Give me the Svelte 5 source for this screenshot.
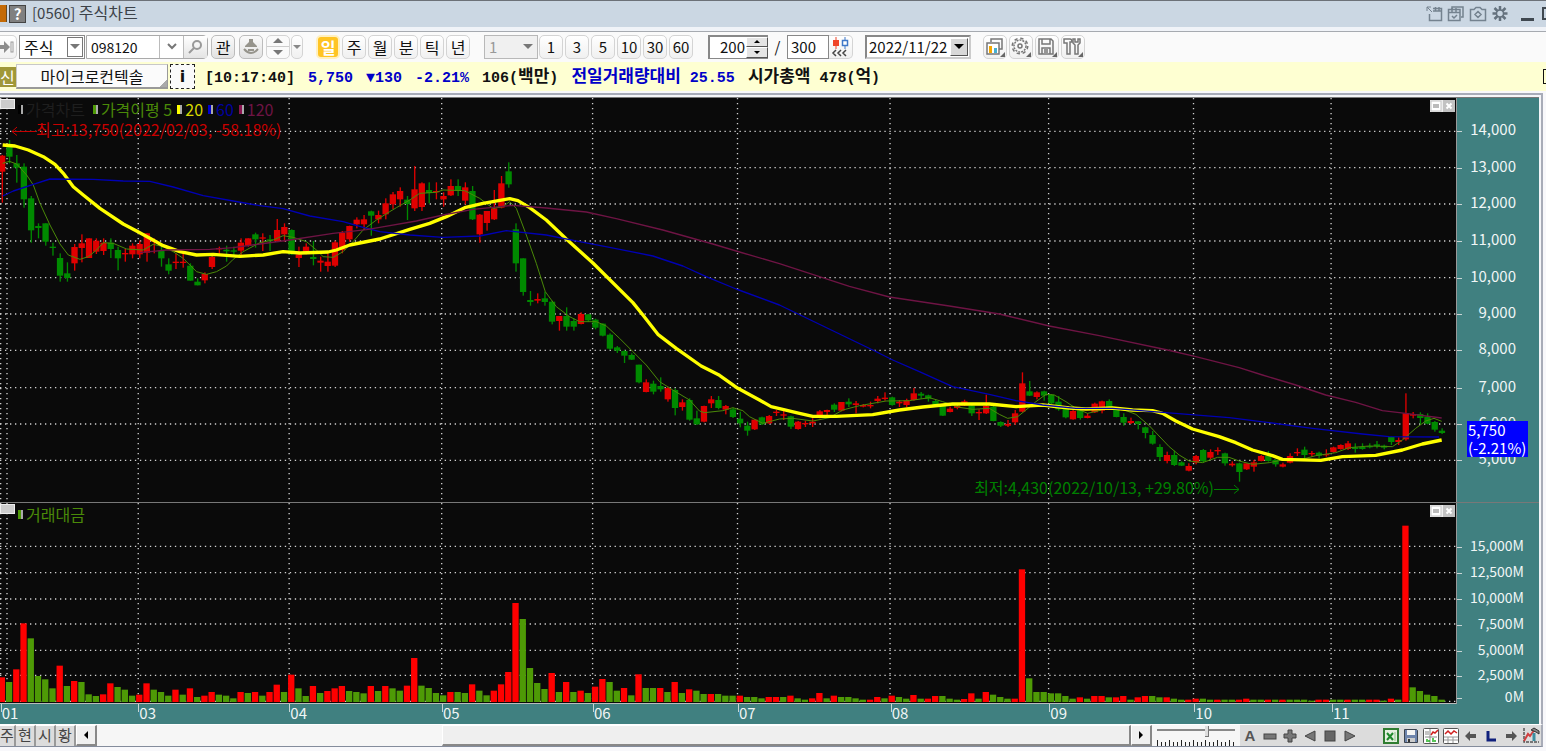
<script lang="ts">
  // plot units: three per pixel, price pane starts at 9
  const W = 4371;
  const PRICE = { top: 9, height: 1212 };
  const VOLUME = { top: 9, height: 600 };

  const xOf = (i: number) => 6 + i * 21.72;

  // direction, high, body top, body bottom, low
  const candles = `R 180 182 230 323,G 135 155 185 205,G 180 205 218 263,G 205 215 313 338,G 303 310 406 443,G 385 393 399 430,G 385 385 440 452,G 443 455 459 482,G 475 489 542 560,G 502 535 549 560
R 447 456 505 527,R 418 445 459 502,R 430 430 489 489,R 430 437 470 477,R 430 443 468 480,G 430 443 462 489,G 455 465 490 526,R 462 474 478 500,R 445 452 478 490,R 437 447 478 490
R 415 415 473 500,R 430 435 440 475,G 455 468 490 515,G 490 508 527 538,R 475 500 504 522,R 470 500 503 518,G 505 512 557 557,G 550 560 571 571,R 532 537 556 565,R 482 486 516 522
R 455 459 462 478,G 452 464 469 500,G 455 466 469 482,R 430 443 467 482,R 430 430 452 455,G 413 418 433 458,R 415 427 431 468,G 420 433 437 468,R 372 405 438 440,R 385 396 418 440
G 403 405 478 480,R 455 478 489 516,R 445 455 470 478,G 438 486 492 511,R 485 497 503 530,R 475 500 513 530,R 437 442 512 516,R 408 414 465 475,R 392 393 433 440,R 367 374 388 400
R 360 373 388 405,G 347 349 362 422,R 347 360 373 385,R 310 325 358 373,R 291 298 328 342,R 277 288 313 335,G 303 314 327 375,R 213 283 340 348,R 262 265 336 348,G 262 285 294 325
R 262 288 292 313,R 292 303 313 335,R 253 273 301 303,G 253 273 288 303,R 262 277 317 328,G 273 288 373 375,R 357 359 418 443,R 348 348 384 407,R 285 340 373 375,R 243 265 338 340
G 202 229 268 278,G 385 403 505 530,G 490 490 591 602,G 588 615 621 632,R 595 612 617 625,G 590 610 621 632,G 617 620 680 688,R 663 663 678 707,G 637 663 695 707,G 670 678 695 707
R 652 657 687 688,G 657 658 676 680,G 671 674 698 703,G 685 686 722 724,G 715 719 761 765,G 753 757 767 774,G 765 768 782 804,G 775 780 794 795,G 809 809 862 865,R 853 862 891 892
G 857 866 890 898,G 847 873 883 890,R 875 879 913 920,G 880 885 939 961,R 913 922 936 947,G 910 915 974 977,G 947 970 988 990,R 932 933 980 982,R 903 913 925 939,G 903 915 939 943
R 930 933 944 958,G 938 943 966 969,G 950 971 985 997,G 980 992 1007 1022,R 973 974 1003 1005,G 965 967 988 990,R 960 963 985 987,R 945 950 954 963,R 947 958 962 975,G 962 964 995 1002
R 978 980 1002 1004,R 977 984 988 996,R 970 980 985 996,R 945 949 965 970,R 944 945 951 960,G 925 929 944 951,R 921 921 947 949,G 910 920 928 936,R 918 925 930 955,R 927 930 935 937
R 920 930 934 940,R 903 911 918 925,R 892 908 912 917,G 905 907 930 932,R 915 920 925 936,R 911 916 930 937,R 879 895 915 917,G 891 896 902 911,G 899 901 911 920,G 913 918 932 936
G 929 932 962 963,R 935 941 951 952,R 930 933 939 943,R 914 919 931 933,G 930 932 955 963,R 943 951 955 975,R 899 933 955 957,G 933 935 978 979,G 979 981 992 996,R 975 987 992 996
R 945 955 982 989,R 832 865 950 952,G 858 889 902 903,R 889 892 906 913,G 887 889 902 917,G 897 899 925 927,G 903 920 943 947,G 933 935 967 970,R 945 948 973 974,G 943 946 969 974
R 955 962 969 970,R 923 926 952 954,R 917 919 947 955,G 913 918 939 940,G 940 943 966 967,G 955 966 983 992,R 968 978 984 987,G 978 979 987 1003,G 995 997 1014 1030,G 1008 1020 1046 1049
G 1048 1056 1086 1098,R 1070 1080 1098 1105,G 1067 1080 1110 1113,G 1099 1102 1112 1113,R 1105 1113 1127 1129,R 1080 1083 1103 1108,G 1062 1065 1099 1103,R 1063 1071 1088 1092,R 1057 1065 1069 1080,G 1073 1075 1105 1112
R 1099 1106 1111 1115,G 1103 1105 1131 1160,R 1105 1105 1123 1125,R 1095 1102 1115 1130,R 1080 1083 1098 1099,G 1068 1083 1098 1100,G 1093 1095 1108 1115,R 1103 1108 1115 1117,R 1075 1083 1103 1105,R 1060 1071 1075 1083
G 1055 1064 1080 1092,R 1068 1074 1078 1085,G 1070 1073 1082 1090,R 1063 1077 1080 1085,R 1055 1057 1071 1073,R 1048 1050 1062 1064,R 1038 1045 1062 1065,G 1045 1057 1062 1073,G 1045 1056 1062 1064,G 1045 1053 1057 1060
G 1038 1048 1053 1060,G 1049 1052 1058 1063,G 1025 1026 1041 1050,R 1027 1035 1041 1050,R 895 955 1033 1037,R 951 957 962 970,G 952 957 969 987,G 955 965 986 988,G 978 981 1004 1010,G 1000 1007 1014 1017`
    .split(/[,\n]/)
    .map((row, i) => {
      const [dir, ...v] = row.trim().split(" ");
      const [high, top, bottom, low] = v.map(Number);
      return { up: dir === "R", x: xOf(i), high, top, bottom, low };
    });

  const volumes = `R74 G60 R98 R236 G191 G78 G68 G41 R109 G48 R63 G60 G23 G18 R23 R56 G45 G37 G19 R22
R56 G37 G30 G19 R37 G22 R41 G15 R19 R30 G22 G19 G11 R30 G27 R30 G19 R30 R52 G30
R82 G41 G18 R48 G27 R33 R41 R48 G33 G30 G26 R48 G33 R48 G41 G34 R49 R132 G49 G42
G27 G20 R30 G30 G27 R53 G34 G20 R34 R53 R90 R297 G249 G102 G57 G39 R87 G30 R60 G30
R34 G27 R46 R69 G60 G34 R42 G20 R83 G42 G42 R42 G30 R60 G27 R38 G34 G24 R24 G24
G19 G19 R19 G15 G15 G11 R15 R15 G15 R19 G11 G7 R11 R27 G11 R19 G15 G15 G11 G7
R7 R15 G11 R19 G15 G10 R21 G10 R10 R18 G18 G10 G7 R9 R26 G10 R30 G22 G15 G10
R10 R398 G71 G30 G30 G26 G26 G18 G10 R14 G10 R18 R18 G14 R14 R18 G7 R14 R18 G18
G14 R14 G10 G7 R7 R10 G10 G7 R7 G7 G7 R7 R10 G7 G7 R7 G7 R7 G7 G7
G7 G4 R7 R7 G7 G7 R7 G7 G7 R7 R7 G4 R10 G7 R529 G44 G33 G22 G18 G7`
    .split(/\s+/)
    .map((v, i) => ({ up: v[0] === "R", x: xOf(i), h: Number(v.slice(1)) }));

  const averages = [
    {
      color: "#4a8a08",
      width: 3,
      points:
        "8,205 28,199 50,207 80,240 100,270 120,325 150,390 180,447 205,480 240,493 265,485 290,465 310,443 340,445 380,462 430,465 460,448 490,455 520,470 550,490 590,530 620,538 650,530 680,513 700,493 730,470 780,443 820,435 850,422 880,427 920,440 950,465 970,485 1000,487 1030,470 1060,440 1090,405 1130,375 1170,350 1190,338 1230,315 1260,295 1310,292 1330,285 1395,287 1440,310 1480,340 1510,335 1530,320 1550,340 1580,420 1610,505 1637,590 1670,635 1710,665 1740,680 1790,680 1820,693 1860,730 1900,770 1940,810 1980,860 2020,885 2070,915 2100,948 2115,953 2170,947 2200,938 2230,947 2250,965 2290,985 2340,972 2380,970 2440,978 2490,968 2530,945 2580,932 2660,918 2730,917 2790,908 2830,920 2880,937 2920,943 2970,940 3000,958 3025,970 3055,965 3080,945 3110,920 3140,898 3165,900 3200,920 3230,940 3265,955 3300,947 3330,935 3370,943 3410,958 3450,992 3510,1055 3540,1080 3570,1098 3610,1103 3655,1087 3690,1087 3720,1098 3760,1108 3810,1103 3850,1095 3920,1090 3950,1082 4010,1073 4050,1058 4110,1053 4180,1055 4210,1035 4250,1000 4280,978 4305,970 4328,979",
    },
    {
      color: "#ffff00",
      width: 10,
      points:
        "8,150 45,153 85,165 130,185 165,208 190,235 220,275 250,300 300,340 370,387 410,408 450,430 490,452 540,470 590,480 640,478 720,484 790,480 850,470 900,474 985,471 1010,465 1050,450 1140,432 1230,403 1290,385 1340,365 1395,338 1450,325 1530,311 1555,317 1590,338 1640,375 1700,432 1780,504 1900,623 1930,660 1975,718 2030,760 2105,813 2160,841 2215,880 2280,915 2315,935 2400,955 2440,964 2510,964 2620,959 2700,945 2770,936 2860,927 2970,927 3050,935 3130,930 3210,939 3260,942 3340,939 3400,945 3460,947 3490,955 3530,978 3580,1002 3660,1025 3710,1043 3760,1065 3820,1082 3850,1093 3965,1096 4030,1085 4130,1081 4210,1065 4270,1047 4328,1035",
    },
    {
      color: "#0000b4",
      width: 4,
      points:
        "8,303 40,288 100,268 150,252 280,253 370,258 450,259 520,276 610,302 700,318 780,332 850,341 930,363 1030,380 1090,397 1140,410 1230,420 1330,427 1440,423 1520,407 1640,420 1740,440 1830,457 1960,483 2050,513 2120,545 2210,582 2340,630 2620,765 2680,795 2760,830 2860,875 2970,898 3050,917 3130,930 3230,940 3340,940 3490,952 3690,968 3810,983 3940,1000 4090,1017 4170,1025 4320,1026",
    },
    {
      color: "#6e1444",
      width: 4,
      points:
        "420,473 500,465 630,463 700,458 780,447 870,435 1000,415 1100,404 1140,397 1250,378 1330,360 1420,343 1540,331 1640,339 1760,351 1850,371 1990,405 2140,447 2220,471 2340,506 2550,574 2670,606 2850,633 3000,657 3150,693 3300,722 3505,765 3590,785 3720,818 3790,840 3890,870 3980,900 4070,922 4150,947 4220,955 4328,969",
    },
  ];

  const prices = [
    ["14,000", 109],
    ["13,000", 218],
    ["12,000", 327],
    ["11,000", 438],
    ["10,000", 548],
    ["9,000", 657],
    ["8,000", 766],
    ["7,000", 878],
    ["6,000", 987],
    ["5,000", 1096],
  ] as const;

  const amounts = [
    ["15,000M", 139],
    ["12,500M", 218],
    ["10,000M", 297],
    ["7,500M", 372],
    ["5,000M", 451],
    ["2,500M", 526],
    ["0M", 590],
  ] as const;

  const months = [
    ["01", 2],
    ["03", 415],
    ["04", 868],
    ["05", 1326],
    ["06", 1779],
    ["07", 2214],
    ["08", 2672],
    ["09", 3148],
    ["10", 3583],
    ["11", 3996],
  ] as const;
  const columns = [2, 21, ...months.slice(1).map((m) => m[1])];

  const legend = [
    ["#4e9a06", "#4a8a08", "가격이평 5"],
    ["#ffff00", "#d8d800", "20"],
    ["#0000d0", "#0000a0", "60"],
    ["#8a1450", "#6e1444", "120"],
  ];

  const periods = ["일", "주", "월", "분", "틱", "년"];
  const minutes = ["1", "3", "5", "10", "30", "60"];

  let period = $state("일");
  let code = $state("098120");
  let shown = $state("200");
  let total = $state("300");
  let zoom = $state(65);

  const pct = (v: number, pane: { top: number; height: number }) =>
    ((v - pane.top) / pane.height) * 100;
</script>

{#snippet paneButtons()}
  <div class="pane-buttons">
    <button aria-label="최대화"><svg width="12" height="12"><rect x="1" y="1" width="10" height="10" fill="#fff" stroke="#c4c4c4" /><rect x="3" y="4" width="6" height="4" fill="#bbb" /></svg></button>
    <button aria-label="닫기"><svg width="12" height="12"><rect width="12" height="12" fill="#c2c2c2" /><path d="M3.500 3.500l5 5m0-5l-5 5" stroke="#fff" stroke-width="2" /></svg></button>
  </div>
{/snippet}

<main>
  <header class="title">
    <span class="app-icon"></span>
    <button class="help" aria-label="도움말">?</button>
    <h1>[0560] <span class="ko">주식차트</span></h1>
    <div class="window-tools">
      <button aria-label="분리"><svg width="18" height="18" fill="none" stroke="#74828f"><path d="M2 2l5 5M2 6V2h4" /><path d="M8 3.500h8.500v12h-12V9M8 6h8M10.500 2v4M14 2v4" stroke-width="1.500" /></svg></button>
      <button aria-label="복사"><svg width="18" height="18" fill="none" stroke="#74828f" stroke-width="1.500"><path d="M5 4V2h11v10h-2" /><path d="M1.500 4.500h11.500v11h-11.500zM2 7.500h11M5 3v4M9 3v4M5 11l2 2 3-3" /></svg></button>
      <button aria-label="캡처"><svg width="18" height="18" fill="none" stroke="#74828f" stroke-width="1.500"><path d="M1.500 4.500h3.500l2-2h4l2 2h3.500v11h-15zM9 6.500l3 3-3 3-3-3z" /></svg></button>
      <button aria-label="설정"><svg width="18" height="18" fill="none" stroke="#65727e"><path d="M9 1v4M9 12v4M1.500 8.500h4M12.500 8.500h4M3.500 3l3 3M11.500 11l3 3M14.500 3l-3 3M6.500 11l-3 3" stroke-width="2.500" /><circle cx="9" cy="8.500" r="3.500" stroke-width="1.500" /></svg></button>
    </div>
    <button class="minimize" aria-label="최소화"></button>
    <button class="maximize" aria-label="최대화"></button>
  </header>

  <div class="toolbar">
    <button class="tool edge" aria-label="이동"><svg width="16" height="14"><path d="M0 5h4V1l6 6-6 6V9H0z" fill="#8d8d8d" /><rect x="11" y="2" width="2" height="10" fill="#fff" stroke="#999" /></svg></button>
    <label class="drop market">
      <select aria-label="시장"><option>주식</option></select>
      <span class="arrow boxed"></span>
    </label>
    <div class="code">
      <input aria-label="종목코드" bind:value={code} />
      <button aria-label="종목 목록"><svg width="12" height="8" fill="none" stroke="#777" stroke-width="2"><path d="M2 1l4 4 4-4" /></svg></button>
      <button aria-label="검색"><svg width="16" height="16" fill="none" stroke="#999" stroke-width="2"><circle cx="9" cy="6" r="4" /><path d="M6 9l-5 5" /></svg></button>
    </div>
    <button class="tool grey ko">관</button>
    <button class="tool grey" aria-label="알림"><svg width="18" height="18" fill="#96948c"><path d="M7 1h4v3l4 4v1H3V8l4-4z" /><path d="M2 11q7 8 14 0M6 12h6" fill="none" stroke="#96948c" stroke-width="2" /></svg></button>
    <div class="updown">
      <button aria-label="이전 종목"><svg width="10" height="5"><path d="M0 5l5-5 5 5z" fill="#777" /></svg></button>
      <button aria-label="다음 종목"><svg width="10" height="5"><path d="M0 0l5 5 5-5z" fill="#777" /></svg></button>
    </div>
    <button class="tool slim" aria-label="더보기"><svg width="8" height="4"><path d="M0 0l4 4 4-4z" fill="#888" /></svg></button>

    <div class="group periods">
      {#each periods as p}
        <button class="tool ko" class:selected={p === period} onclick={() => (period = p)}>{p}</button>
      {/each}
    </div>

    <label class="drop step">
      <select aria-label="분틱 단위"><option>1</option></select>
      <span class="arrow"></span>
    </label>
    <div class="group">
      {#each minutes as m}
        <button class="tool">{m}</button>
      {/each}
    </div>

    <div class="spin">
      <input aria-label="표시 개수" bind:value={shown} />
      <div class="spin-buttons">
        <button aria-label="늘리기"><svg width="6" height="3"><path d="M0 3l3-3 3 3z" /></svg></button>
        <button aria-label="줄이기"><svg width="6" height="3"><path d="M0 0l3 3 3-3z" /></svg></button>
      </div>
    </div>
    <span class="slash">/</span>
    <input class="total" aria-label="전체 개수" bind:value={total} />
    <button class="tool join" aria-label="봉 이동"><svg width="20" height="20"><path d="M5 0v12" stroke="#f04428" /><rect x="2" y="3" width="6" height="6" fill="#f04428" /><path d="M14 0v3M14 9v3" stroke="#3f78c8" /><rect x="11.500" y="3.500" width="5" height="5" fill="#fff" stroke="#3f78c8" stroke-width="1.500" /><path d="M5 13l-3 3 3 3M10 13l-3 3 3 3M15 13l-3 3 3 3" fill="none" stroke="#444" stroke-width="1.500" /></svg></button>
    <label class="drop date">
      <select aria-label="기준일"><option>2022/11/22</option></select>
      <span class="arrow raised"></span>
    </label>

    <div class="group">
      <button class="tool" aria-label="차트 종류"><svg width="20" height="20" fill="none" stroke="#777" stroke-width="1.500"><path d="M6 5V2h11v10h-3" /><rect x="2" y="6" width="12" height="11" fill="#fff" /><path d="M5.500 16V9" stroke="#f5a800" stroke-width="3" /><path d="M10.500 16v-5" stroke="#45b0d0" stroke-width="3" /><path d="M20 15v5h-5z" fill="#666" stroke="none" /></svg></button>
      <button class="tool" aria-label="환경설정"><svg width="20" height="20" fill="none" stroke="#777" stroke-width="1.500"><circle cx="9" cy="9" r="7" stroke-width="3" stroke-dasharray="3 2.500" /><circle cx="9" cy="9" r="6" stroke="#fafafa" stroke-width="2" /><circle cx="9" cy="9" r="6" stroke-dasharray="2 1" /><circle cx="9" cy="9" r="2" /><path d="M20 15v5h-5z" fill="#666" stroke="none" /></svg></button>
      <button class="tool" aria-label="저장"><svg width="20" height="20" fill="none" stroke="#777" stroke-width="1.500"><path d="M2 2h12l2 2v13H2zM5 2v5h8V2M5 17v-6h8v6M7 13h4M7 15h4" /><path d="M20 15v5h-5z" fill="#666" stroke="none" /></svg></button>
      <button class="tool" aria-label="도구"><svg width="20" height="20" fill="none" stroke="#777" stroke-width="1.500"><path d="M1 2h6q2 0 2 3H7v12H4V6H1z" /><path d="M10 2v4l2 2v9h3V8l2-2V2h-2v3h-3V2z" /><path d="M20 15v5h-5z" fill="#666" stroke="none" /></svg></button>
    </div>
  </div>

  <div class="status">
    <span class="badge ko">신</span>
    <button class="name ko">마이크로컨텍솔</button>
    <button class="info">i</button>
    <p>
      <span>[10:17:40]</span>
      <span class="down">5,750</span>
      <span class="down">▼130</span>
      <span class="down">-2.21%</span>
      <span>106(<b class="ko">백만</b>)</span>
      <span class="down"><b class="ko">전일거래량대비</b> 25.55</span>
      <span><b class="ko">시가총액</b> 478(<b class="ko">억</b>)</span>
    </p>
    <span class="clip"></span>
  </div>

  <section class="chart">
    <div class="pane price">
      <div class="plot">
        <svg viewBox="0 {PRICE.top} {W} {PRICE.height}" preserveAspectRatio="none" role="img" aria-label="가격차트">
          <g class="grid">
            {#each prices as [, y]}<line x1="0" x2={W} y1={y} y2={y} />{/each}
            {#each columns as x}<line x1={x} x2={x} y1="9" y2="1221" />{/each}
          </g>
          {#each candles as c}
            <g fill={c.up ? "#e00000" : "#008a00"}>
              <rect x={c.x - 1} y={c.high} width="4" height={c.low - c.high} />
              <rect x={c.x - 9} y={c.top} width="19" height={Math.max(c.bottom - c.top, 4)} />
            </g>
          {/each}
          {#each averages as line}
            <polyline points={line.points} fill="none" stroke={line.color} stroke-width={line.width} stroke-linejoin="round" />
          {/each}
        </svg>
        <span class="corner"></span>
        <div class="legend">
          <span class="item base"><i style="background: #000"></i>가격차트</span>
          {#each legend as [mark, color, text]}
            <span class="item" style="color: {color}"><i style="background: {mark}"></i>{text}</span>
          {/each}
        </div>
        <p class="note high">
          <svg width="25" height="10" fill="none" stroke="#c80000"><path d="M25 5.500H1M6 1L1 5.500l5 4" /></svg>최고:13,750(2022/02/03, -58.18%)
        </p>
        <p class="note low">
          최저:4,430(2022/10/13, +29.80%)<svg width="26" height="10" fill="none" stroke="#008000"><path d="M0 5.500h25M20 1l5 4.500-5 4" /></svg>
        </p>
        {@render paneButtons()}
      </div>
      <div class="axis">
        {#each prices as [text, y]}
          <span class="tick" style="top: {pct(y, PRICE)}%">{text}</span>
        {/each}
        <strong class="last">5,750<br />(-2.21%)</strong>
      </div>
    </div>

    <div class="pane volume">
      <div class="plot">
        <svg viewBox="0 {VOLUME.top} {W} {VOLUME.height}" preserveAspectRatio="none" role="img" aria-label="거래대금">
          <g class="grid">
            {#each amounts.slice(0, 6) as [, y]}<line x1="0" x2={W} y1={y} y2={y} />{/each}
            <line x1="0" x2={W} y1="604" y2="604" />
            {#each columns as x}<line x1={x} x2={x} y1="9" y2="609" />{/each}
          </g>
          {#each volumes as v}
            <rect x={v.x - 10} y={606 - v.h} width="19" height={v.h} fill={v.up ? "#ff0000" : "#4e9a06"} />
          {/each}
        </svg>
        <span class="corner"></span>
        <div class="legend">
          <span class="item" style="color: #4a8a08"><i style="background: #4e9a06"></i>거래대금</span>
        </div>
        {@render paneButtons()}
      </div>
      <div class="axis">
        {#each amounts as [text, y]}
          <span class="tick right" style="top: {pct(y, VOLUME)}%">{text}</span>
        {/each}
      </div>
    </div>

    <div class="time">
      <div class="months">
        {#each months as [text, x]}
          <span style="left: {(x / W) * 100}%">{text}</span>
        {/each}
      </div>
    </div>
  </section>

  <footer>
    {#each ["주", "현", "시", "황"] as tab}
      <button class="tab">{tab}</button>
    {/each}
    <button class="scroll" aria-label="왼쪽"><svg width="4" height="8"><path d="M4 0v8L0 4z" /></svg></button>
    <div class="track"><div class="thumb"></div></div>
    <button class="scroll" aria-label="오른쪽"><svg width="4" height="8"><path d="M0 0v8l4-4z" /></svg></button>
    <div class="slider">
      <input type="range" aria-label="확대" min="0" max="100" bind:value={zoom} />
      <svg width="78" height="6" fill="#222">
        {#each Array(20) as _, i}<rect x={i * 4} y={i % 3 ? 2 : 0} width="1" height="6" />{/each}
      </svg>
    </div>
    <div class="icons">
      <button aria-label="글자"><b>A</b></button>
      <button aria-label="축소"><svg width="14" height="14"><rect x="1" y="5" width="12" height="5" fill="#777" stroke="#444" /></svg></button>
      <button aria-label="확대"><svg width="14" height="14"><path d="M5 1h4v4h4v4H9v4H5V9H1V5h4z" fill="#777" stroke="#444" /></svg></button>
      <button aria-label="뒤로"><svg width="14" height="14"><path d="M12 2v10L2 7z" fill="#777" stroke="#444" /></svg></button>
      <button aria-label="정지"><svg width="14" height="14"><rect x="2" y="2" width="10" height="10" fill="#666" stroke="#444" /></svg></button>
      <button aria-label="재생"><svg width="14" height="14"><path d="M2 2v10l10-5z" fill="#777" stroke="#444" /></svg></button>
      <span class="gap"></span>
      <button aria-label="엑셀"><svg width="16" height="16"><rect x="1" y="1" width="14" height="14" fill="#e4f0e0" stroke="#2f7d32" stroke-width="2" /><path d="M4 5l6 7M10 5l-6 7" stroke="#1e8a2c" stroke-width="2" /><path d="M12 4v9" stroke="#8cc48c" /></svg></button>
      <button aria-label="저장"><svg width="16" height="16"><path d="M1.500 1.500h12l1 1v12h-13z" fill="#6d84ac" stroke="#3c4450" /><path d="M4 2h8v5H4z" fill="#f4f4f4" /><path d="M4 10h8v4H4z" fill="#ccc" /><path d="M5 11h2v3H5z" fill="#333" /></svg></button>
      <button aria-label="종합차트"><svg width="16" height="16" fill="none"><rect x=".5" y=".5" width="15" height="15" rx="1" fill="#fff" stroke="#555" /><path d="M2 4h4M2 6h4M2 9h12M7 1v14" stroke="#888" /><path d="M8 7l2-3 2 1 3-3" stroke="#d02020" stroke-width="1.500" /><path d="M4 14v-3M6 14v-2M10 14v-4M12 14v-2" stroke="#20b020" stroke-width="1.500" /></svg></button>
      <button aria-label="차트표"><svg width="16" height="16" fill="none"><rect x=".5" y=".5" width="15" height="15" rx="1" fill="#fff" stroke="#555" /><path d="M1 9h14M1 12h14M5 9v6M10 9v6" stroke="#999" /><path d="M2 6l3-3 3 3 3-3 3 2" stroke="#d02020" stroke-width="1.500" /></svg></button>
      <button aria-label="이전"><svg width="14" height="14"><path d="M1 7l5-5v3h6v4H6v3z" fill="#555" /></svg></button>
      <button aria-label="로그"><svg width="14" height="14"><path d="M4 2v9h8" fill="none" stroke="#10207c" stroke-width="3" /></svg></button>
      <button aria-label="다음"><svg width="14" height="14"><path d="M13 7L8 2v3H2v4h6v3z" fill="#555" /></svg></button>
      <button aria-label="차트도구"><svg width="18" height="18" fill="none"><path d="M2 1v14h15" stroke="#555" stroke-width="1.500" stroke-dasharray="3 1" /><path d="M2 14l4-7 2 2 5-7" stroke="#d04040" stroke-width="2" /><path d="M9 3l3-2 5 3v3l-3-2z" fill="#888" stroke="#333" /><path d="M12 6v8" stroke="#3c8ea0" stroke-width="3" /></svg></button>
    </div>
  </footer>
</main>

<style>
  :global(body) {
    margin: 0;
    background: #f8f8fb;
  }

  main {
    display: flex;
    flex-direction: column;
    height: 100vh;
    box-sizing: border-box;
    overflow: hidden;
    padding-bottom: 4px;
    color: #111;
    font: 15px/20px "Noto Sans CJK KR", sans-serif;
  }

  /* control reset */
  button,
  input,
  select {
    box-sizing: border-box;
    margin: 0;
    padding: 0;
    border: 0;
    border-radius: 0;
    background: none;
    color: inherit;
    font: inherit;
  }

  button {
    display: flex;
    align-items: center;
    justify-content: center;
    flex: none;
  }

  .ko {
    font-size: 16px;
  }

  p,
  h1 {
    margin: 0;
    font-weight: normal;
    white-space: nowrap;
  }

  .title {
    display: flex;
    align-items: center;
    flex: none;
    height: 27px;
    box-sizing: border-box;
    padding-bottom: 1px;
    border-top: 1px solid #6c7178;
    background: #cbd7e3;
    color: #3c4248;
  }

  .title h1 {
    font-size: 15px;
    line-height: 22px;
    flex: 1;
    margin-left: 6px;
    padding-bottom: 2px;
  }

  .app-icon {
    width: 6px;
    height: 17px;
    background: #c46a06;
    border-right: 1px solid #6a4a20;
  }

  .help {
    width: 17px;
    height: 18px;
    margin-left: 2px;
    background: #808080;
    border: 1px solid #444;
    color: #fff;
    font-weight: bold;
  }

  .window-tools {
    display: flex;
    gap: 4px;
    margin-right: 12px;
  }

  .minimize {
    width: 13px;
    height: 14px;
    border-bottom: 3px solid #404850;
    margin-right: 8px;
  }

  .maximize {
    width: 4px;
    height: 13px;
    border: 2px solid #404850;
    border-right: 0;
  }

  .toolbar {
    display: flex;
    align-items: center;
    flex: none;
    height: 35px;
    box-sizing: border-box;
    border-top: 4px solid #f0f3f8;
    background: #fafafa;
    box-shadow: inset 0 1px #a6aab0;
  }

  .tool {
    width: 24px;
    height: 24px;
    border: 1px solid #d4d4d4;
    border-radius: 5px;
    background: linear-gradient(#fff, #f0f0f0);
  }

  .tool.grey {
    margin-left: 4px;
    border-color: #bcbcbc;
    background: linear-gradient(#fafafa, #e2e2e2);
  }

  .tool.grey.ko {
    margin-left: 3px;
  }

  .tool.edge {
    width: 17px;
    border-left: 0;
    border-radius: 0 5px 5px 0;
    margin-right: 2px;
  }

  .tool.slim {
    width: 12px;
    margin-left: 1px;
  }

  .tool.join {
    border-left: 0;
    border-radius: 0 5px 5px 0;
  }

  .tool.selected {
    background: #ffc423;
    border: 2px solid #fff0c0;
    color: #fff;
    font-weight: bold;
  }

  .group {
    display: flex;
    gap: 2px;
  }

  .periods {
    margin: 0 14px 0 13px;
  }

  .drop {
    position: relative;
    display: flex;
    align-items: center;
    flex: none;
    height: 24px;
    box-sizing: border-box;
    border: 1px solid #8a8a8a;
    background: #fff;
  }

  .drop select {
    appearance: none;
    width: 100%;
    height: 100%;
    padding-left: 4px;
  }

  .arrow {
    position: absolute;
    right: 1px;
    top: 1px;
    bottom: 1px;
    width: 16px;
    display: grid;
    place-items: center;
    pointer-events: none;
  }

  .arrow::after {
    content: "";
    border: 5px solid transparent;
    border-top-color: #777;
    border-bottom: 0;
  }

  .arrow.boxed {
    border: 1px solid #777;
    box-sizing: border-box;
  }

  .arrow.raised {
    background: #d8d8d8;
    border: 1px solid #fff;
    border-right-color: #555;
    border-bottom-color: #555;
  }

  .arrow.raised::after {
    border-top-color: #000;
  }

  .market {
    width: 66px;
  }

  .market select {
    font-size: 16px;
  }

  .step {
    width: 54px;
    background: #f0f0f0;
    border-color: #b8b8b8;
    color: #999;
    margin-right: 1px;
  }

  .date {
    width: 106px;
    border: 2px solid #888;
    border-right-color: #ccc;
    border-bottom-color: #ccc;
    margin: 0 12px;
  }

  .date select {
    padding-left: 2px;
  }

  .code {
    display: flex;
    height: 24px;
    margin-left: 1px;
    box-sizing: border-box;
    border: 1px solid #aaa;
    border-radius: 0 5px 5px 0;
    background: #fff;
  }

  .code input {
    width: 72px;
    padding-left: 4px;
    font-size: 14px;
  }

  .code button {
    width: 24px;
    border-left: 1px solid #bbb;
  }

  .code button:last-child {
    background: linear-gradient(#fff, #e4e4e4);
  }

  .updown {
    display: flex;
    flex-direction: column;
    width: 24px;
    height: 24px;
    margin-left: 3px;
    box-sizing: border-box;
    border: 1px solid #d4d4d4;
    border-radius: 5px;
  }

  .updown button {
    flex: 1;
  }

  .updown button + button {
    border-top: 1px solid #ccc;
  }

  .spin {
    display: flex;
    height: 24px;
    width: 60px;
    margin-left: 15px;
    box-sizing: border-box;
    border: solid #888;
    border-width: 2px 0 1px 2px;
    background: #fff;
  }

  .spin input {
    width: 36px;
    padding-right: 1px;
    text-align: right;
  }

  .spin-buttons {
    display: flex;
    flex-direction: column;
    flex: 1;
  }

  .spin-buttons button {
    flex: 1;
    background: #e4e4e4;
    border: 1px solid #fff;
    border-right-color: #555;
    border-bottom-color: #555;
  }

  .slash {
    width: 19px;
    text-align: center;
  }

  .total {
    width: 42px;
    height: 24px;
    padding-left: 3px;
    border: 1px solid #888;
    background: #fff;
  }

  .status {
    display: flex;
    align-items: center;
    flex: none;
    height: 29px;
    background: #feffd2;
  }

  .badge {
    width: 16px;
    height: 20px;
    background: #a09838;
    color: #fff;
  }

  .name {
    width: 152px;
    height: 25px;
    border: 1px solid #c8c8c8;
    border-right-color: #999;
    border-bottom: 2px solid #999;
    background: linear-gradient(315deg, #aaa 5px, transparent 5px), #fbfbfb;
  }

  .info {
    width: 25px;
    height: 25px;
    margin: 0 10px 0 2px;
    border: 1px dashed #222;
    background: #fafafa;
    font: bold 16px "DejaVu Sans", sans-serif;
  }

  .status p {
    display: flex;
    align-items: baseline;
    gap: 13px;
    font: bold 15px/20px "Liberation Mono", "Noto Sans CJK KR", monospace;
  }

  .status b.ko {
    font-family: "Noto Sans CJK KR", sans-serif;
    font-weight: bold;
    font-size: 17px;
    line-height: 20px;
  }

  .down {
    color: #0000c8;
  }

  .clip {
    width: 2px;
    height: 13px;
    margin-left: auto;
    border: 1px solid #111;
    border-right: 0;
  }

  .chart {
    flex: 1;
    min-height: 0;
    display: flex;
    flex-direction: column;
    margin: 2px 3px 0 0;
    padding: 2px 2px 0 0;
    border: solid #a8acb8;
    border-width: 2px 2px 0 0;
    background: #f4f5f8;
  }

  .pane {
    display: flex;
    min-height: 0;
    border-top: 1px solid #787878;
  }

  .price {
    flex: 404;
  }

  .volume {
    flex: 201;
  }

  .plot {
    position: relative;
    flex: 1;
    min-width: 0;
    background: #0a0a0a;
    border-right: 1px solid #999;
  }

  .volume .plot {
    border-bottom: 1px solid #bbb;
  }

  .plot > svg {
    display: block;
    position: absolute;
    width: 100%;
    height: 100%;
  }

  .grid {
    stroke: #d0d0d0;
    stroke-width: 4;
    stroke-dasharray: 4 11;
  }

  .corner {
    position: absolute;
    left: 0;
    top: 1px;
    width: 13px;
    height: 8px;
    background: #ccc;
    border: 1px solid #eee;
  }

  .legend {
    position: absolute;
    left: 18px;
    top: 1px;
    display: flex;
    gap: 5px;
    font-size: 16px;
  }

  .item {
    display: flex;
    align-items: center;
    gap: 3px;
  }

  .item i {
    width: 3px;
    height: 9px;
    border-right: 2px solid #aaa;
  }

  .base {
    color: #1e1e1e;
    margin-right: 3px;
  }

  .note {
    position: absolute;
    font-size: 16px;
  }

  .high {
    left: 11px;
    top: 21px;
    color: #c80000;
  }

  .low {
    right: 216px;
    bottom: 5px;
    color: #008000;
  }

  .pane-buttons {
    position: absolute;
    right: 1px;
    top: 2px;
    display: flex;
    gap: 1px;
    background: #eee;
  }

  .axis {
    position: relative;
    width: 82px;
    flex: none;
    background: #408080;
    color: #f0f6f6;
  }

  .tick {
    position: absolute;
    left: 0;
    right: 23px;
    margin-top: -12px;
    text-align: right;
  }

  .tick::before {
    content: "";
    position: absolute;
    left: 0;
    top: 12px;
    width: 5px;
    border-top: 1px solid #c8d4d4;
  }

  .tick.right {
    right: 15px;
    font-size: 14px;
  }

  .last {
    position: absolute;
    left: 10px;
    top: 80%;
    width: 61px;
    padding-left: 1px;
    box-sizing: border-box;
    background: #0000ff;
    color: #fff;
    font-weight: normal;
    line-height: 18px;
  }

  .time {
    flex: none;
    height: 20px;
    padding-right: 82px;
    background: #408080;
    color: #f0f6f6;
  }

  .months {
    position: relative;
    line-height: 18px;
  }

  .months span {
    position: absolute;
    padding-left: 1px;
  }

  .months span::before {
    content: "";
    position: absolute;
    left: 0;
    height: 8px;
    border-left: 1px solid #c8d4d4;
  }

  footer {
    display: flex;
    flex: none;
    height: 23px;
    box-sizing: border-box;
    margin-right: 3px;
    border-top: 1px solid #fff;
    border-right: 2px solid #a8acb8;
    border-bottom: 1px solid #848c9c;
    background: #f6f6f6;
  }

  .tab {
    width: 20px;
    padding-bottom: 2px;
    background: #dcdcdc;
    border-right: 2px solid #999;
    border-top: 1px solid #fff;
    color: #444;
  }

  .tab:first-child {
    width: 16px;
  }

  .scroll {
    width: 21px;
    background: #f0f0f0;
    border: 1px solid #fff;
    border-right: 2px solid #888;
    border-bottom: 2px solid #888;
  }

  .track {
    display: flex;
    flex: 1;
    justify-content: flex-end;
  }

  .thumb {
    width: 66.6%;
    box-sizing: border-box;
    background: #efefef;
    border: 1px solid #fff;
    border-right: 2px solid #888;
    border-bottom: 2px solid #888;
  }

  .slider {
    width: 78px;
    margin: 0 5px;
    display: flex;
    flex-direction: column;
    justify-content: space-between;
  }

  .slider input {
    appearance: none;
    width: 78px;
    height: 12px;
    background: linear-gradient(#888, #888) 0 4px / 100% 2px no-repeat;
  }

  .slider input::-webkit-slider-thumb {
    appearance: none;
    width: 4px;
    height: 11px;
    background: #ddd;
    border: solid #777;
    border-width: 0 1px 1px 0;
  }

  .icons {
    display: flex;
    align-items: center;
    width: 301px;
    flex: none;
    background: #dcdcdc;
  }

  .icons button {
    width: 20px;
    height: 20px;
  }

  .icons b {
    color: #555;
    font: bold 15px "Liberation Sans", sans-serif;
  }

  .gap {
    flex: 1;
  }
</style>
